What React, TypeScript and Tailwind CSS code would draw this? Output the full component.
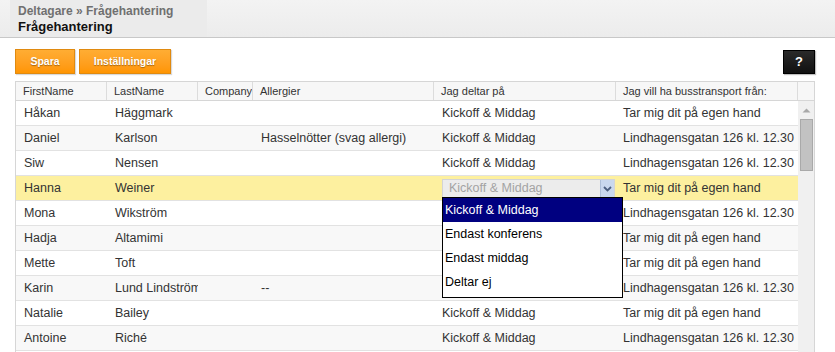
import React from 'react';

type Row = { first: string; last: string; company: string; allergy: string; attend: string; bus: string };

const rows: Row[] = [
  { first: 'Håkan', last: 'Häggmark', company: '', allergy: '', attend: 'Kickoff & Middag', bus: 'Tar mig dit på egen hand' },
  { first: 'Daniel', last: 'Karlson', company: '', allergy: 'Hasselnötter (svag allergi)', attend: 'Kickoff & Middag', bus: 'Lindhagensgatan 126 kl. 12.30' },
  { first: 'Siw', last: 'Nensen', company: '', allergy: '', attend: 'Kickoff & Middag', bus: 'Lindhagensgatan 126 kl. 12.30' },
  { first: 'Hanna', last: 'Weiner', company: '', allergy: '', attend: '', bus: 'Tar mig dit på egen hand' },
  // the open list covers "Jag deltar på" for the next four rows
  { first: 'Mona', last: 'Wikström', company: '', allergy: '', attend: '', bus: 'Lindhagensgatan 126 kl. 12.30' },
  { first: 'Hadja', last: 'Altamimi', company: '', allergy: '', attend: '', bus: 'Tar mig dit på egen hand' },
  { first: 'Mette', last: 'Toft', company: '', allergy: '', attend: '', bus: 'Tar mig dit på egen hand' },
  { first: 'Karin', last: 'Lund Lindström', company: '', allergy: '--', attend: '', bus: 'Lindhagensgatan 126 kl. 12.30' },
  { first: 'Natalie', last: 'Bailey', company: '', allergy: '', attend: 'Kickoff & Middag', bus: 'Tar mig dit på egen hand' },
  { first: 'Antoine', last: 'Riché', company: '', allergy: '', attend: 'Kickoff & Middag', bus: 'Lindhagensgatan 126 kl. 12.30' },
];

const cols = 'grid grid-cols-[91px_91px_55px_181px_182px_182px]';
const options = ['Kickoff & Middag', 'Endast konferens', 'Endast middag', 'Deltar ej'];

function AttendSelect() {
  return (
    <div className="relative w-full h-full">
      <div className="absolute left-0 top-[3px] w-[173px] h-[19px] flex border border-[#d4d4d4] bg-[#ececec]">
        <span className="flex-1 pl-[6px] text-[#a3a3a3] leading-[17px] whitespace-nowrap overflow-hidden">Kickoff &amp; Middag</span>
        <span className="w-[14px] h-full bg-[#c9d8ee] border-l border-[#aebfd8] flex items-center justify-center">
          <svg width="9" height="6" viewBox="0 0 9 6">
            <path d="M1 1 L4.5 4.5 L8 1" fill="none" stroke="#4c5f80" strokeWidth="1.8" />
          </svg>
        </span>
      </div>
      <div className="absolute left-0 top-[21px] w-[181px] bg-white border border-black z-10 pb-[3px]">
        {options.map((o, i) => (
          <div
            key={o}
            className={
              'h-[24px] pl-[2px] flex items-center whitespace-nowrap ' +
              (i === 0 ? 'bg-[#000080] text-white' : 'text-black')
            }
          >
            {o}
          </div>
        ))}
      </div>
    </div>
  );
}

export default function App() {
  return (
    <div className="w-[835px] h-[352px] overflow-hidden bg-white font-['Liberation_Sans',Arial,sans-serif] text-[#333]">
      {/* header band */}
      <div className="h-[38px] flex bg-gradient-to-b from-[#f3f3f3] to-[#ececec] border-b border-[#c8c8c8]">
        <div className="ml-[10px] w-[197px] bg-[#ebebeb] pl-[8px] pt-[4px] leading-[15px]">
          <div className="text-[12px] font-bold text-[#707070] whitespace-nowrap">Deltagare » Frågehantering</div>
          <div className="text-[13px] font-bold text-[#111]">Frågehantering</div>
        </div>
      </div>

      {/* toolbar */}
      <div className="flex items-center justify-between pl-[15px] pr-[20px] pt-[11px] pb-[7px]">
        <div className="flex gap-[4px]">
          <button className="h-[25px] w-[60px] bg-gradient-to-b from-[#ffad33] to-[#ff9500] border border-[#e08a10] text-white text-[10.5px] font-bold [text-shadow:0_1px_1px_rgba(0,0,0,0.35)] shadow-[1px_1px_1px_rgba(0,0,0,0.15)]">
            Spara
          </button>
          <button className="h-[25px] w-[92px] bg-gradient-to-b from-[#ffad33] to-[#ff9500] border border-[#e08a10] text-white text-[10.5px] font-bold [text-shadow:0_1px_1px_rgba(0,0,0,0.35)] shadow-[1px_1px_1px_rgba(0,0,0,0.15)]">
            Inställningar
          </button>
        </div>
        <button className="h-[24px] w-[32px] bg-gradient-to-b from-[#2a2a2a] to-[#111] border border-black text-white text-[13px] font-bold shadow-[1px_1px_1px_rgba(0,0,0,0.25)]">
          ?
        </button>
      </div>

      {/* grid */}
      <div className="ml-[15px] w-[800px] border-l border-r border-[#d6d6d6]">
        <div className="flex h-[20px] bg-[#f7f7f7] border-t border-b border-[#d6d6d6] text-[11px]">
          <div className={cols}>
            {['FirstName', 'LastName', 'Company', 'Allergier', 'Jag deltar på', 'Jag vill ha busstransport från:'].map(h => (
              <div key={h} className="pl-[7px] border-r border-[#dcdcdc] leading-[18px] whitespace-nowrap overflow-hidden">
                {h}
              </div>
            ))}
          </div>
          <div className="w-[18px]" />
        </div>

        <div className="flex">
          <div className="w-[782px] text-[12.5px]">
            {rows.map((r, i) => {
              const bg = r.first === 'Hanna' ? 'bg-[#fdf09f]' : i % 2 === 1 ? 'bg-[#f8f8f8]' : 'bg-white';
              return (
                <div key={r.first} className={cols + ' h-[25px] border-b border-[#e2e2e2] ' + bg}>
                  <div className="pl-[8px] flex items-center whitespace-nowrap overflow-hidden">{r.first}</div>
                  <div className="pl-[8px] flex items-center whitespace-nowrap overflow-hidden">{r.last}</div>
                  <div className="pl-[8px] flex items-center whitespace-nowrap overflow-hidden">{r.company}</div>
                  <div className="pl-[8px] flex items-center whitespace-nowrap overflow-hidden">{r.allergy}</div>
                  <div className="pl-[8px] flex items-center whitespace-nowrap">
                    {r.first === 'Hanna' ? <AttendSelect /> : r.attend}
                  </div>
                  <div className="pl-[7px] flex items-center whitespace-nowrap overflow-hidden">{r.bus}</div>
                </div>
              );
            })}
            <div className="h-[25px]" />
          </div>
          <div className="w-[18px] bg-[#f0f0f0] flex flex-col items-center pt-[7px]">
            <svg width="9" height="5" viewBox="0 0 9 5">
              <path d="M0.5 4.5 L4.5 0.5 L8.5 4.5 Z" fill="#a8a8a8" />
            </svg>
            <div className="mt-[6px] w-[13px] h-[52px] bg-[#c2c2c2] border border-[#a9a9a9]" />
          </div>
        </div>
      </div>
    </div>
  );
}
